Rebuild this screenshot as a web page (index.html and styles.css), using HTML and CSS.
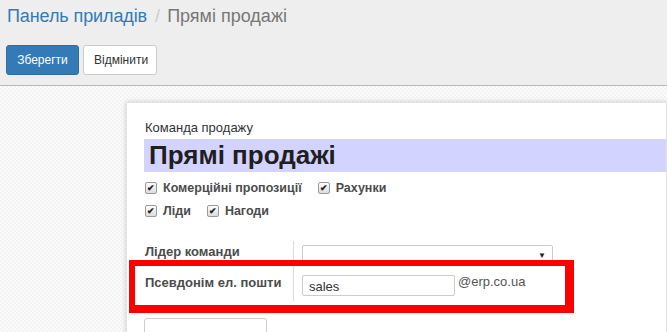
FILE: index.html
```html
<!DOCTYPE html>
<html lang="uk">
<head>
    <meta charset="UTF-8">
    <title>Прямі продажі</title>
    <link rel="stylesheet" href="styles.css">
</head>
<body>

    <div class="control-panel">
        <div class="breadcrumb">
            <a href="#" class="crumb-link">Панель приладів</a>
            <span class="crumb-sep">/</span>
            <span class="crumb-active">Прямі продажі</span>
        </div>
        <div class="buttons">
            <button class="btn btn-primary">Зберегти</button>
            <button class="btn btn-default">Відмінити</button>
        </div>
    </div>

    <div class="content">
        <div class="sheet">
            <div class="field-caption">Команда продажу</div>
            <div class="title-input">Прямі продажі</div>

            <div class="checks first">
                <label class="check"><span class="box">✔</span>Комерційні пропозиції</label>
                <label class="check"><span class="box">✔</span>Рахунки</label>
            </div>
            <div class="checks">
                <label class="check"><span class="box">✔</span>Ліди</label>
                <label class="check"><span class="box">✔</span>Нагоди</label>
            </div>

            <div class="group">
                <div class="row row-leader">
                    <div class="label">Лідер команди</div>
                    <div class="value">
                        <div class="select"><span class="arrow">▼</span></div>
                    </div>
                </div>
                <div class="row row-alias">
                    <div class="label">Псевдонім ел. пошти</div>
                    <div class="value">
                        <div class="text-input">sales</div>
                        <span class="domain">@erp.co.ua</span>
                    </div>
                </div>
            </div>

            <div class="bottom-box"></div>

            <div class="highlight"></div>
        </div>
    </div>

</body>
</html>
```

FILE: styles.css
```css
body {
    margin: 0;
    font-family: "Liberation Sans", Arial, sans-serif;
    background-color: #fff;
    overflow: hidden;
}

.control-panel {
    background-color: #efeeee;
    border-bottom: 1px solid #b8b8b8;
    height: 85px;
    padding: 0 6px;
}

.breadcrumb {
    padding-top: 4px;
    font-size: 18px;
    line-height: 24px;
}

.crumb-link {
    color: #337ab7;
    text-decoration: none;
    margin-left: 1px;
    letter-spacing: -0.1px;
}

.crumb-sep {
    color: #ccc;
    margin: 0 2px 0 3px;
}

.crumb-active {
    color: #777;
}

.buttons {
    margin-top: 17px;
    display: flex;
    gap: 4px;
}

.btn {
    font-family: "Liberation Sans", Arial, sans-serif;
    font-size: 12px;
    height: 30px;
    padding: 0 10px;
    border-radius: 3px;
    border: 1px solid #ccc;
    cursor: pointer;
}

.btn-primary {
    background-color: #337ab7;
    border-color: #2e6da4;
    color: #fff;
    width: 73px;
}

.btn-default {
    background-color: #fff;
    color: #333;
    width: 74px;
}

.content {
    height: 246px;
    background-color: #f8f8f8;
    background-image: repeating-conic-gradient(#f3f3f3 0 25%, #fbfbfb 0 50%);
    background-size: 4px 4px;
    padding-top: 16px;
}

.sheet {
    position: relative;
    margin-left: 126px;
    height: 300px;
    background-color: #fff;
    border: 1px solid #e2e2e2;
    box-shadow: 0 0 5px rgba(0, 0, 0, 0.18);
    padding: 16px 0 0 17px;
}

.field-caption {
    font-size: 13px;
    line-height: 18px;
    color: #333;
    margin-left: 1px;
}

.title-input {
    margin-top: 2px;
    height: 33px;
    background-color: #d3d3ff;
    font-size: 26px;
    font-weight: bold;
    line-height: 33px;
    color: #1f1f1f;
    padding-left: 5px;
}

.checks {
    display: flex;
    gap: 16px;
    height: 23px;
    align-items: center;
    margin-left: 1px;
}

.checks.first {
    margin-top: 4px;
}

.check {
    display: flex;
    align-items: center;
    font-size: 12.5px;
    font-weight: bold;
    color: #4c4c4c;
}

.box {
    width: 10px;
    height: 10px;
    border: 1px solid #9a9a9a;
    border-radius: 2px;
    background: linear-gradient(#fdfdfd, #dcdcdc);
    font-size: 9px;
    line-height: 10px;
    text-align: center;
    color: #222;
    margin-right: 6px;
}

.group {
    margin-top: 19px;
    margin-left: 1px;
}

.row {
    display: flex;
}

.label {
    width: 148px;
    border-right: 1px solid #ddd;
    font-size: 13px;
    font-weight: bold;
    color: #4c4c4c;
    line-height: 18px;
}

.value {
    padding-left: 8px;
    display: flex;
    align-items: flex-start;
}

.row-leader {
    height: 24px;
}

.row-leader .label {
    padding-top: 2px;
}

.row-alias {
    height: 36px;
}

.row-alias .label {
    padding-top: 9px;
}

.select {
    position: relative;
    margin-top: 4px;
    width: 249px;
    height: 18px;
    border: 1px solid #ccc;
    border-radius: 2px;
    background-color: #fff;
}

.arrow {
    position: absolute;
    right: 6px;
    top: 5px;
    font-size: 8px;
    color: #222;
}

.text-input {
    margin-top: 10px;
    width: 145px;
    height: 19px;
    border: 1px solid #ccc;
    border-radius: 2px;
    padding-left: 6px;
    font-size: 13px;
    line-height: 21px;
    color: #333;
}

.domain {
    margin-top: 9px;
    margin-left: 3px;
    font-size: 13px;
    color: #555;
}

.bottom-box {
    margin-top: 17px;
    width: 121px;
    height: 30px;
    border: 1px solid #ccc;
    border-radius: 3px;
}

.highlight {
    position: absolute;
    left: 2px;
    top: 157px;
    width: 430px;
    height: 39px;
    border-style: solid;
    border-color: #ff0000;
    border-width: 6px 9px 8px 6px;
}
```
